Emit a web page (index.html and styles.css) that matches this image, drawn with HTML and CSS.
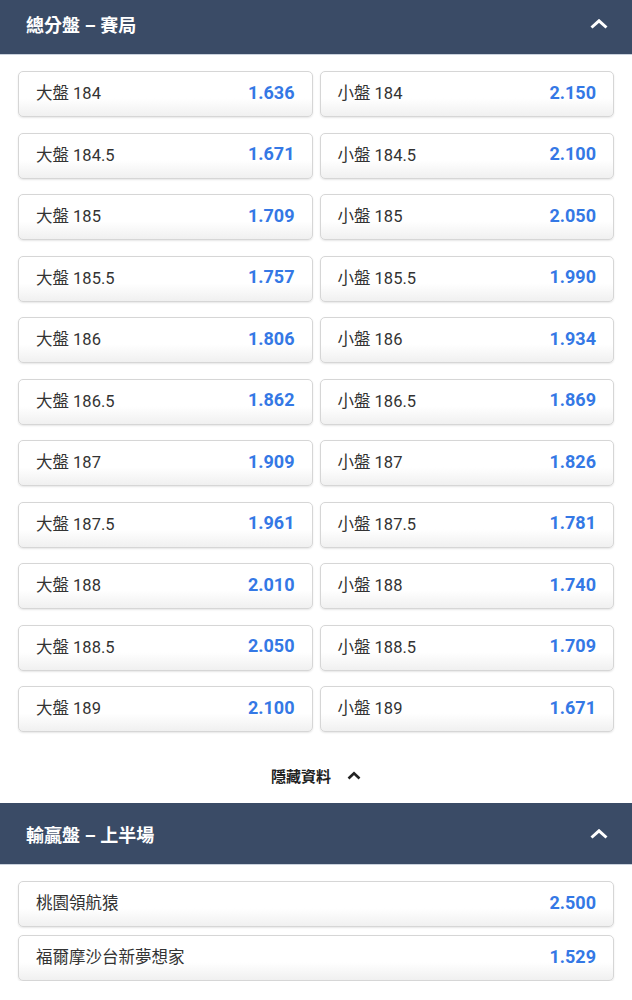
FILE: index.html
```html
<!DOCTYPE html>
<html lang="zh-Hant">
<head>
    <meta charset="UTF-8">
    <meta name="viewport" content="width=device-width, initial-scale=1.0">
    <title>賽事盤口</title>
    <link rel="stylesheet" href="styles.css">
</head>
<body>
    <div class="page">
        <section class="market">
            <div class="market-head">
                <span class="market-title">總分盤 – 賽局</span>
                <svg class="chevron" width="18" height="10" viewBox="0 0 18 10"><path d="M1.5 8.5 L9 1.8 L16.5 8.5" fill="none" stroke="#fff" stroke-width="3"/></svg>
            </div>
            <div class="market-body">
                <div class="odds-grid">
                    <div class="odd"><span class="odd-label">大盤 184</span><span class="odd-price">1.636</span></div>
                    <div class="odd"><span class="odd-label">小盤 184</span><span class="odd-price">2.150</span></div>
                    <div class="odd"><span class="odd-label">大盤 184.5</span><span class="odd-price">1.671</span></div>
                    <div class="odd"><span class="odd-label">小盤 184.5</span><span class="odd-price">2.100</span></div>
                    <div class="odd"><span class="odd-label">大盤 185</span><span class="odd-price">1.709</span></div>
                    <div class="odd"><span class="odd-label">小盤 185</span><span class="odd-price">2.050</span></div>
                    <div class="odd"><span class="odd-label">大盤 185.5</span><span class="odd-price">1.757</span></div>
                    <div class="odd"><span class="odd-label">小盤 185.5</span><span class="odd-price">1.990</span></div>
                    <div class="odd"><span class="odd-label">大盤 186</span><span class="odd-price">1.806</span></div>
                    <div class="odd"><span class="odd-label">小盤 186</span><span class="odd-price">1.934</span></div>
                    <div class="odd"><span class="odd-label">大盤 186.5</span><span class="odd-price">1.862</span></div>
                    <div class="odd"><span class="odd-label">小盤 186.5</span><span class="odd-price">1.869</span></div>
                    <div class="odd"><span class="odd-label">大盤 187</span><span class="odd-price">1.909</span></div>
                    <div class="odd"><span class="odd-label">小盤 187</span><span class="odd-price">1.826</span></div>
                    <div class="odd"><span class="odd-label">大盤 187.5</span><span class="odd-price">1.961</span></div>
                    <div class="odd"><span class="odd-label">小盤 187.5</span><span class="odd-price">1.781</span></div>
                    <div class="odd"><span class="odd-label">大盤 188</span><span class="odd-price">2.010</span></div>
                    <div class="odd"><span class="odd-label">小盤 188</span><span class="odd-price">1.740</span></div>
                    <div class="odd"><span class="odd-label">大盤 188.5</span><span class="odd-price">2.050</span></div>
                    <div class="odd"><span class="odd-label">小盤 188.5</span><span class="odd-price">1.709</span></div>
                    <div class="odd"><span class="odd-label">大盤 189</span><span class="odd-price">2.100</span></div>
                    <div class="odd"><span class="odd-label">小盤 189</span><span class="odd-price">1.671</span></div>
                </div>
                <div class="toggle">
                    <span>隱藏資料</span>
                    <svg width="14" height="9" viewBox="0 0 14 9"><path d="M1.5 7.5 L7 2.2 L12.5 7.5" fill="none" stroke="#222" stroke-width="2.6"/></svg>
                </div>
            </div>
        </section>

        <section class="market">
            <div class="market-head">
                <span class="market-title">輸贏盤 – 上半場</span>
                <svg class="chevron" width="18" height="10" viewBox="0 0 18 10"><path d="M1.5 8.5 L9 1.8 L16.5 8.5" fill="none" stroke="#fff" stroke-width="3"/></svg>
            </div>
            <div class="market-body">
                <div class="odds-list">
                    <div class="odd"><span class="odd-label">桃園領航猿</span><span class="odd-price">2.500</span></div>
                    <div class="odd"><span class="odd-label">福爾摩沙台新夢想家</span><span class="odd-price">1.529</span></div>
                </div>
            </div>
        </section>
    </div>
</body>
</html>
```

FILE: styles.css
```css
body {
    margin: 0;
    background: #fff;
    font-family: Roboto, "Noto Sans CJK TC", sans-serif;
    color: #333;
}

/* page is scrolled a little, so first header is cut */
.page {
    margin-top: -7px;
}

.market-head {
    height: 62px;
    box-sizing: border-box;
    background: #3a4b66;
    border-bottom: 1px solid #c9d1dc;
    display: flex;
    align-items: center;
    justify-content: space-between;
    padding: 0 24px 0 26px;
}

.market-title {
    color: #fff;
    font-size: 18px;
    font-weight: 700;
}

.market-body {
    padding: 16px 18px 0;
}

.odds-grid {
    display: grid;
    grid-template-columns: 1fr 1fr;
    column-gap: 7px;
    row-gap: 15.5px;
}

.odds-list {
    display: flex;
    flex-direction: column;
    gap: 8px;
}

.odd {
    height: 46px;
    box-sizing: border-box;
    display: flex;
    align-items: center;
    justify-content: space-between;
    padding: 0 17px 4px;
    border: 1px solid #d6d6d6;
    border-radius: 5px;
    background: linear-gradient(#fff 60%, #f0f0f0);
    box-shadow: 0 1px 2px rgba(0, 0, 0, 0.1);
}

.odd-label {
    font-size: 16.5px;
    color: #333;
}

.odd-price {
    font-size: 18px;
    font-weight: 700;
    color: #3478e5;
}

.toggle {
    height: 56px;
    margin-top: 15px;
    display: flex;
    align-items: center;
    justify-content: center;
    gap: 16px;
    font-size: 15px;
    font-weight: 700;
    color: #222;
}
```
